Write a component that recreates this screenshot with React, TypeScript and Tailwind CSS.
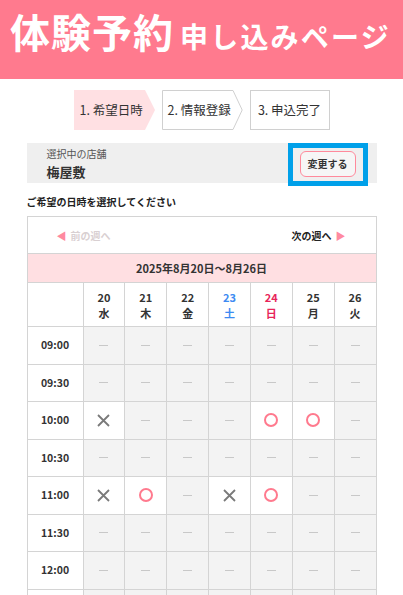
import React from "react";

type Slot = "none" | "ok" | "ng";

const days = [
  { d: "20", w: "水", color: "text-[#333]" },
  { d: "21", w: "木", color: "text-[#333]" },
  { d: "22", w: "金", color: "text-[#333]" },
  { d: "23", w: "土", color: "text-[#3d8bf2]" },
  { d: "24", w: "日", color: "text-[#e8255a]" },
  { d: "25", w: "月", color: "text-[#333]" },
  { d: "26", w: "火", color: "text-[#333]" },
];

// last row only peeks in at the bottom edge, so its label is left out
const rows: { time: string; slots: Slot[] }[] = [
  { time: "09:00", slots: ["none", "none", "none", "none", "none", "none", "none"] },
  { time: "09:30", slots: ["none", "none", "none", "none", "none", "none", "none"] },
  { time: "10:00", slots: ["ng", "none", "none", "none", "ok", "ok", "none"] },
  { time: "10:30", slots: ["none", "none", "none", "none", "none", "none", "none"] },
  { time: "11:00", slots: ["ng", "ok", "none", "ng", "ok", "none", "none"] },
  { time: "11:30", slots: ["none", "none", "none", "none", "none", "none", "none"] },
  { time: "12:00", slots: ["none", "none", "none", "none", "none", "none", "none"] },
  { time: "", slots: ["none", "none", "none", "none", "none", "none", "none"] },
];

function Step({ label, shape, active }: { label: string; shape: "arrow" | "box"; active?: boolean }) {
  const w = shape === "arrow" ? 81 : 80;
  return (
    <div className="relative flex h-[40px] items-center" style={{ width: w }}>
      <svg className="absolute inset-0" width={w} height={40} viewBox={`0 0 ${w} 40`}>
        {shape === "arrow" ? (
          active ? (
            <polygon points={`0,0 ${w - 10},0 ${w},20 ${w - 10},40 0,40`} fill="#ffe0e3" />
          ) : (
            <polygon
              points={`0.5,0.5 ${w - 10},0.5 ${w - 0.8},20 ${w - 10},39.5 0.5,39.5`}
              fill="#fff"
              stroke="#d0d0d0"
              strokeWidth="1"
            />
          )
        ) : (
          <rect x="0.5" y="0.5" width={w - 1} height="39" fill="#fff" stroke="#d0d0d0" strokeWidth="1" />
        )}
      </svg>
      <span
        className={`relative text-[12.5px] text-[#333] ${shape === "box" ? "w-full text-center" : "pl-[6px]"}`}
      >
        {label}
      </span>
    </div>
  );
}

function Cell({ slot }: { slot: Slot }) {
  if (slot === "ok") {
    return (
      <div className="flex h-[36.5px] items-center justify-center bg-white">
        <span className="block h-[14px] w-[14px] rounded-full border-2 border-[#ff7a8e]" />
      </div>
    );
  }
  if (slot === "ng") {
    return (
      <div className="flex h-[36.5px] items-center justify-center bg-white">
        <svg width="13" height="13" viewBox="0 0 13 13">
          <path d="M1 1 L12 12 M12 1 L1 12" stroke="#7a7a7a" strokeWidth="1.8" />
        </svg>
      </div>
    );
  }
  return (
    <div className="flex h-[36.5px] items-center justify-center bg-[#f3f3f3]">
      <span className="block h-px w-[9px] bg-[#c8c8c8]" />
    </div>
  );
}

export default function App() {
  return (
    <div
      className="min-h-[595px] bg-white text-[#333]"
      style={{ fontFamily: '"Noto Sans CJK JP", "Noto Sans", sans-serif' }}
    >
      <header className="flex h-[79px] items-start bg-[#ff7a8e] pl-[10px] pt-[3px] text-white">
        <h1 className="flex items-baseline font-bold">
          <span className="text-[40px] leading-[56px] tracking-[1px]">体験予約</span>
          <span className="ml-[6px] text-[28px] tracking-[2.2px]">申し込みページ</span>
        </h1>
      </header>

      <div className="mt-[11px] flex justify-center gap-[7px]">
        <Step label="1. 希望日時" shape="arrow" active />
        <Step label="2. 情報登録" shape="arrow" />
        <Step label="3. 申込完了" shape="box" />
      </div>

      <div className="mx-auto mt-[13px] w-[350px]">
        <div className="relative flex h-[40px] items-center justify-between bg-[#efefef] pl-[20px] pr-[21px]">
          <div className="leading-none">
            <div className="text-[10px] text-[#555]">選択中の店舗</div>
            <div className="mt-[6px] text-[13px] font-bold text-[#333]">梅屋敷</div>
          </div>
          <button className="relative z-10 mt-[1px] h-[26px] w-[56px] rounded-[6px] border border-[#ff8a9c] bg-[#f6f6f6] text-[10px] font-bold text-[#333]">
            変更する
          </button>
          <div className="pointer-events-none absolute left-[261px] top-0 h-[43px] w-[80px] border-[5px] border-[#00a0e9]" />
        </div>

        <p className="mt-[14px] text-[10px] font-bold leading-none text-[#222]">ご希望の日時を選択してください</p>

        <div className="mt-[9px] border border-[#d4d4d4]">
          <div className="flex h-[37px] items-center justify-between border-b border-[#d4d4d4] pl-[29px] pr-[30px] text-[10px] font-bold">
            <span className="flex items-center gap-[4px] text-[#d9d0d2]">
              <span className="text-[10px] text-[#ff8aa0]">◀</span>前の週へ
            </span>
            <span className="flex items-center gap-[4px] text-[#222]">
              次の週へ<span className="text-[10px] text-[#ff8aa0]">▶</span>
            </span>
          </div>
          <div className="flex h-[29px] items-center justify-center border-b border-[#d4d4d4] bg-[#ffdfe2] text-[11px] font-bold text-[#333]">
            2025年8月20日～8月26日
          </div>
          <div className="grid grid-cols-[55px_repeat(7,1fr)] gap-px bg-[#d4d4d4]">
            <div className="h-[43px] bg-white" />
            {days.map((d) => (
              <div
                key={d.d}
                className={`flex h-[43px] flex-col items-center justify-center bg-white text-[11px] font-bold leading-[16px] ${d.color}`}
              >
                <span>{d.d}</span>
                <span>{d.w}</span>
              </div>
            ))}
            {rows.map((r, ri) => (
              <React.Fragment key={ri}>
                <div className="flex h-[36.5px] items-center justify-center bg-white text-[10.5px] font-bold text-[#333]">
                  {r.time}
                </div>
                {r.slots.map((s, i) => (
                  <Cell key={i} slot={s} />
                ))}
              </React.Fragment>
            ))}
          </div>
        </div>
      </div>
    </div>
  );
}
